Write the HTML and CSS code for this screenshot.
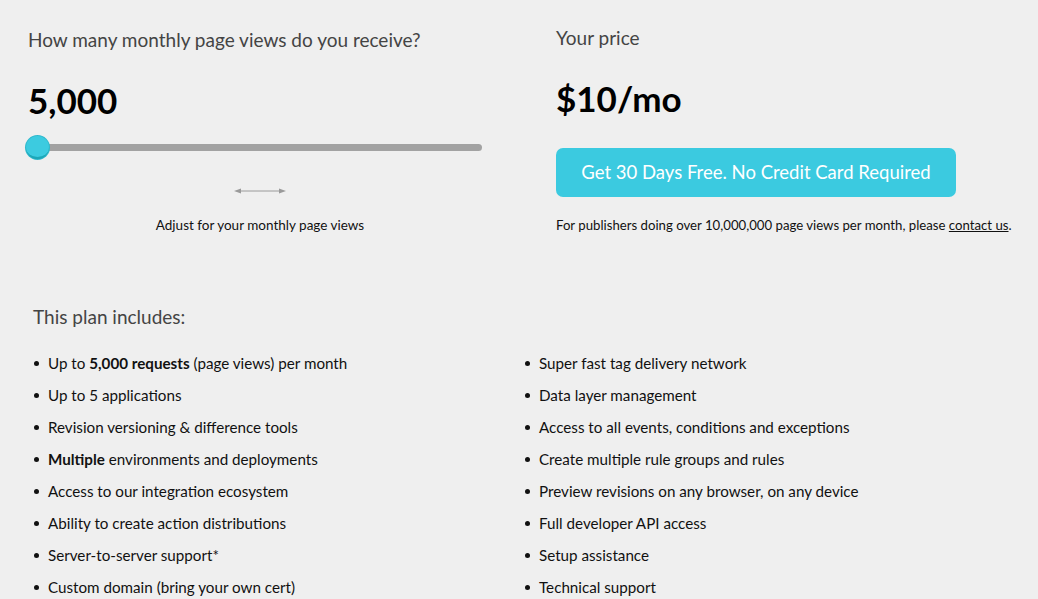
FILE: index.html
```html
<!DOCTYPE html>
<html>
<head>
<meta charset="utf-8">
<link rel="stylesheet" href="styles.css">
</head>
<body>
<div class="page">
  <section class="top">
    <div class="calc">
      <h2 class="label">How many monthly page views do you receive?</h2>
      <div class="big">5,000</div>
      <div class="slider">
        <div class="track"></div>
        <div class="thumb"></div>
      </div>
      <div class="hint">
        <svg class="arrows" width="52" height="8" viewBox="0 0 52 8">
          <line x1="4" y1="4" x2="48" y2="4" stroke="#9a9a9a" stroke-width="1"/>
          <path d="M0 4 L7 1.5 L7 6.5 Z" fill="#9a9a9a"/>
          <path d="M52 4 L45 1.5 L45 6.5 Z" fill="#9a9a9a"/>
        </svg>
        <p class="hint-text">Adjust for your monthly page views</p>
      </div>
    </div>
    <div class="price">
      <h2 class="label price-label">Your price</h2>
      <div class="big">$10/mo</div>
      <a class="cta">Get 30 Days Free. No Credit Card Required</a>
      <p class="note">For publishers doing over 10,000,000 page views per month, please <a class="link">contact us</a>.</p>
    </div>
  </section>
  <section class="plan">
    <h3 class="plan-title">This plan includes:</h3>
    <div class="lists">
      <ul class="features">
        <li>Up to <b>5,000 requests</b> (page views) per month</li>
        <li>Up to 5 applications</li>
        <li>Revision versioning &amp; difference tools</li>
        <li><b>Multiple</b> environments and deployments</li>
        <li>Access to our integration ecosystem</li>
        <li>Ability to create action distributions</li>
        <li>Server-to-server support*</li>
        <li>Custom domain (bring your own cert)</li>
      </ul>
      <ul class="features">
        <li>Super fast tag delivery network</li>
        <li>Data layer management</li>
        <li>Access to all events, conditions and exceptions</li>
        <li>Create multiple rule groups and rules</li>
        <li>Preview revisions on any browser, on any device</li>
        <li>Full developer API access</li>
        <li>Setup assistance</li>
        <li>Technical support</li>
      </ul>
    </div>
  </section>
</div>
</body>
</html>
```

FILE: styles.css
```css
* { box-sizing: border-box; }
html, body { margin: 0; padding: 0; background: #efefef; }
body {
  font-family: "Lato", "Liberation Sans", sans-serif;
  color: #111;
  overflow: hidden;
}
.page { padding: 0 0 0 28px; }
.top {
  display: grid;
  grid-template-columns: 454px 400px;
  column-gap: 74px;
  padding-top: 28px;
}
.label {
  margin: 0;
  font-weight: 400;
  font-size: 19px;
  line-height: 24px;
  color: #444;
}
.price-label { margin-top: -2px; }
.big {
  margin-top: 28px;
  font-size: 35px;
  font-weight: 700;
  line-height: 40px;
  color: #000;
}
.slider {
  position: relative;
  margin-top: 15px;
  height: 24px;
}
.track {
  position: absolute;
  left: 0; right: 0; top: 9px;
  height: 7px;
  border-radius: 4px;
  background: #a2a2a2;
}
.thumb {
  position: absolute;
  left: -2px; top: 1px;
  width: 23px; height: 23px;
  border-radius: 50%;
  background: #3ccbe0;
  border-bottom: 2px solid #1ca7b8;
  box-shadow: 0 0 0 1px #2fb8cc;
}
.hint { text-align: center; padding-left: 10px; }
.arrows { display: block; margin: 28px auto 0; }
.hint-text {
  margin: 22px 0 0;
  font-size: 13.5px;
  color: #111;
}
.price .big { margin-top: 28px; }
.cta {
  display: block;
  margin-top: 30px;
  height: 49px;
  line-height: 49px;
  background: #3bcae0;
  border-radius: 7px;
  color: #fff;
  text-align: center;
  font-size: 18.5px;
}
.note {
  margin: 20px 0 0;
  font-size: 13.2px;
  color: #111;
  white-space: nowrap;
}
.link { text-decoration: underline; color: #111; }
.plan { padding: 0 0 0 5px; margin-top: 72px; }
.plan-title {
  margin: 0;
  font-weight: 400;
  font-size: 19px;
  line-height: 24px;
  color: #444;
}
.lists {
  display: grid;
  grid-template-columns: 491px 1fr;
  margin-top: 18px;
}
.features {
  margin: 0;
  padding: 0;
  list-style: none;
}
.features li {
  position: relative;
  padding-left: 15px;
  font-size: 15.2px;
  line-height: 32px;
  color: #111;
}
.features li::before {
  content: "";
  position: absolute;
  left: 1px; top: 14px;
  width: 5px; height: 5px;
  border-radius: 50%;
  background: #111;
}
```
